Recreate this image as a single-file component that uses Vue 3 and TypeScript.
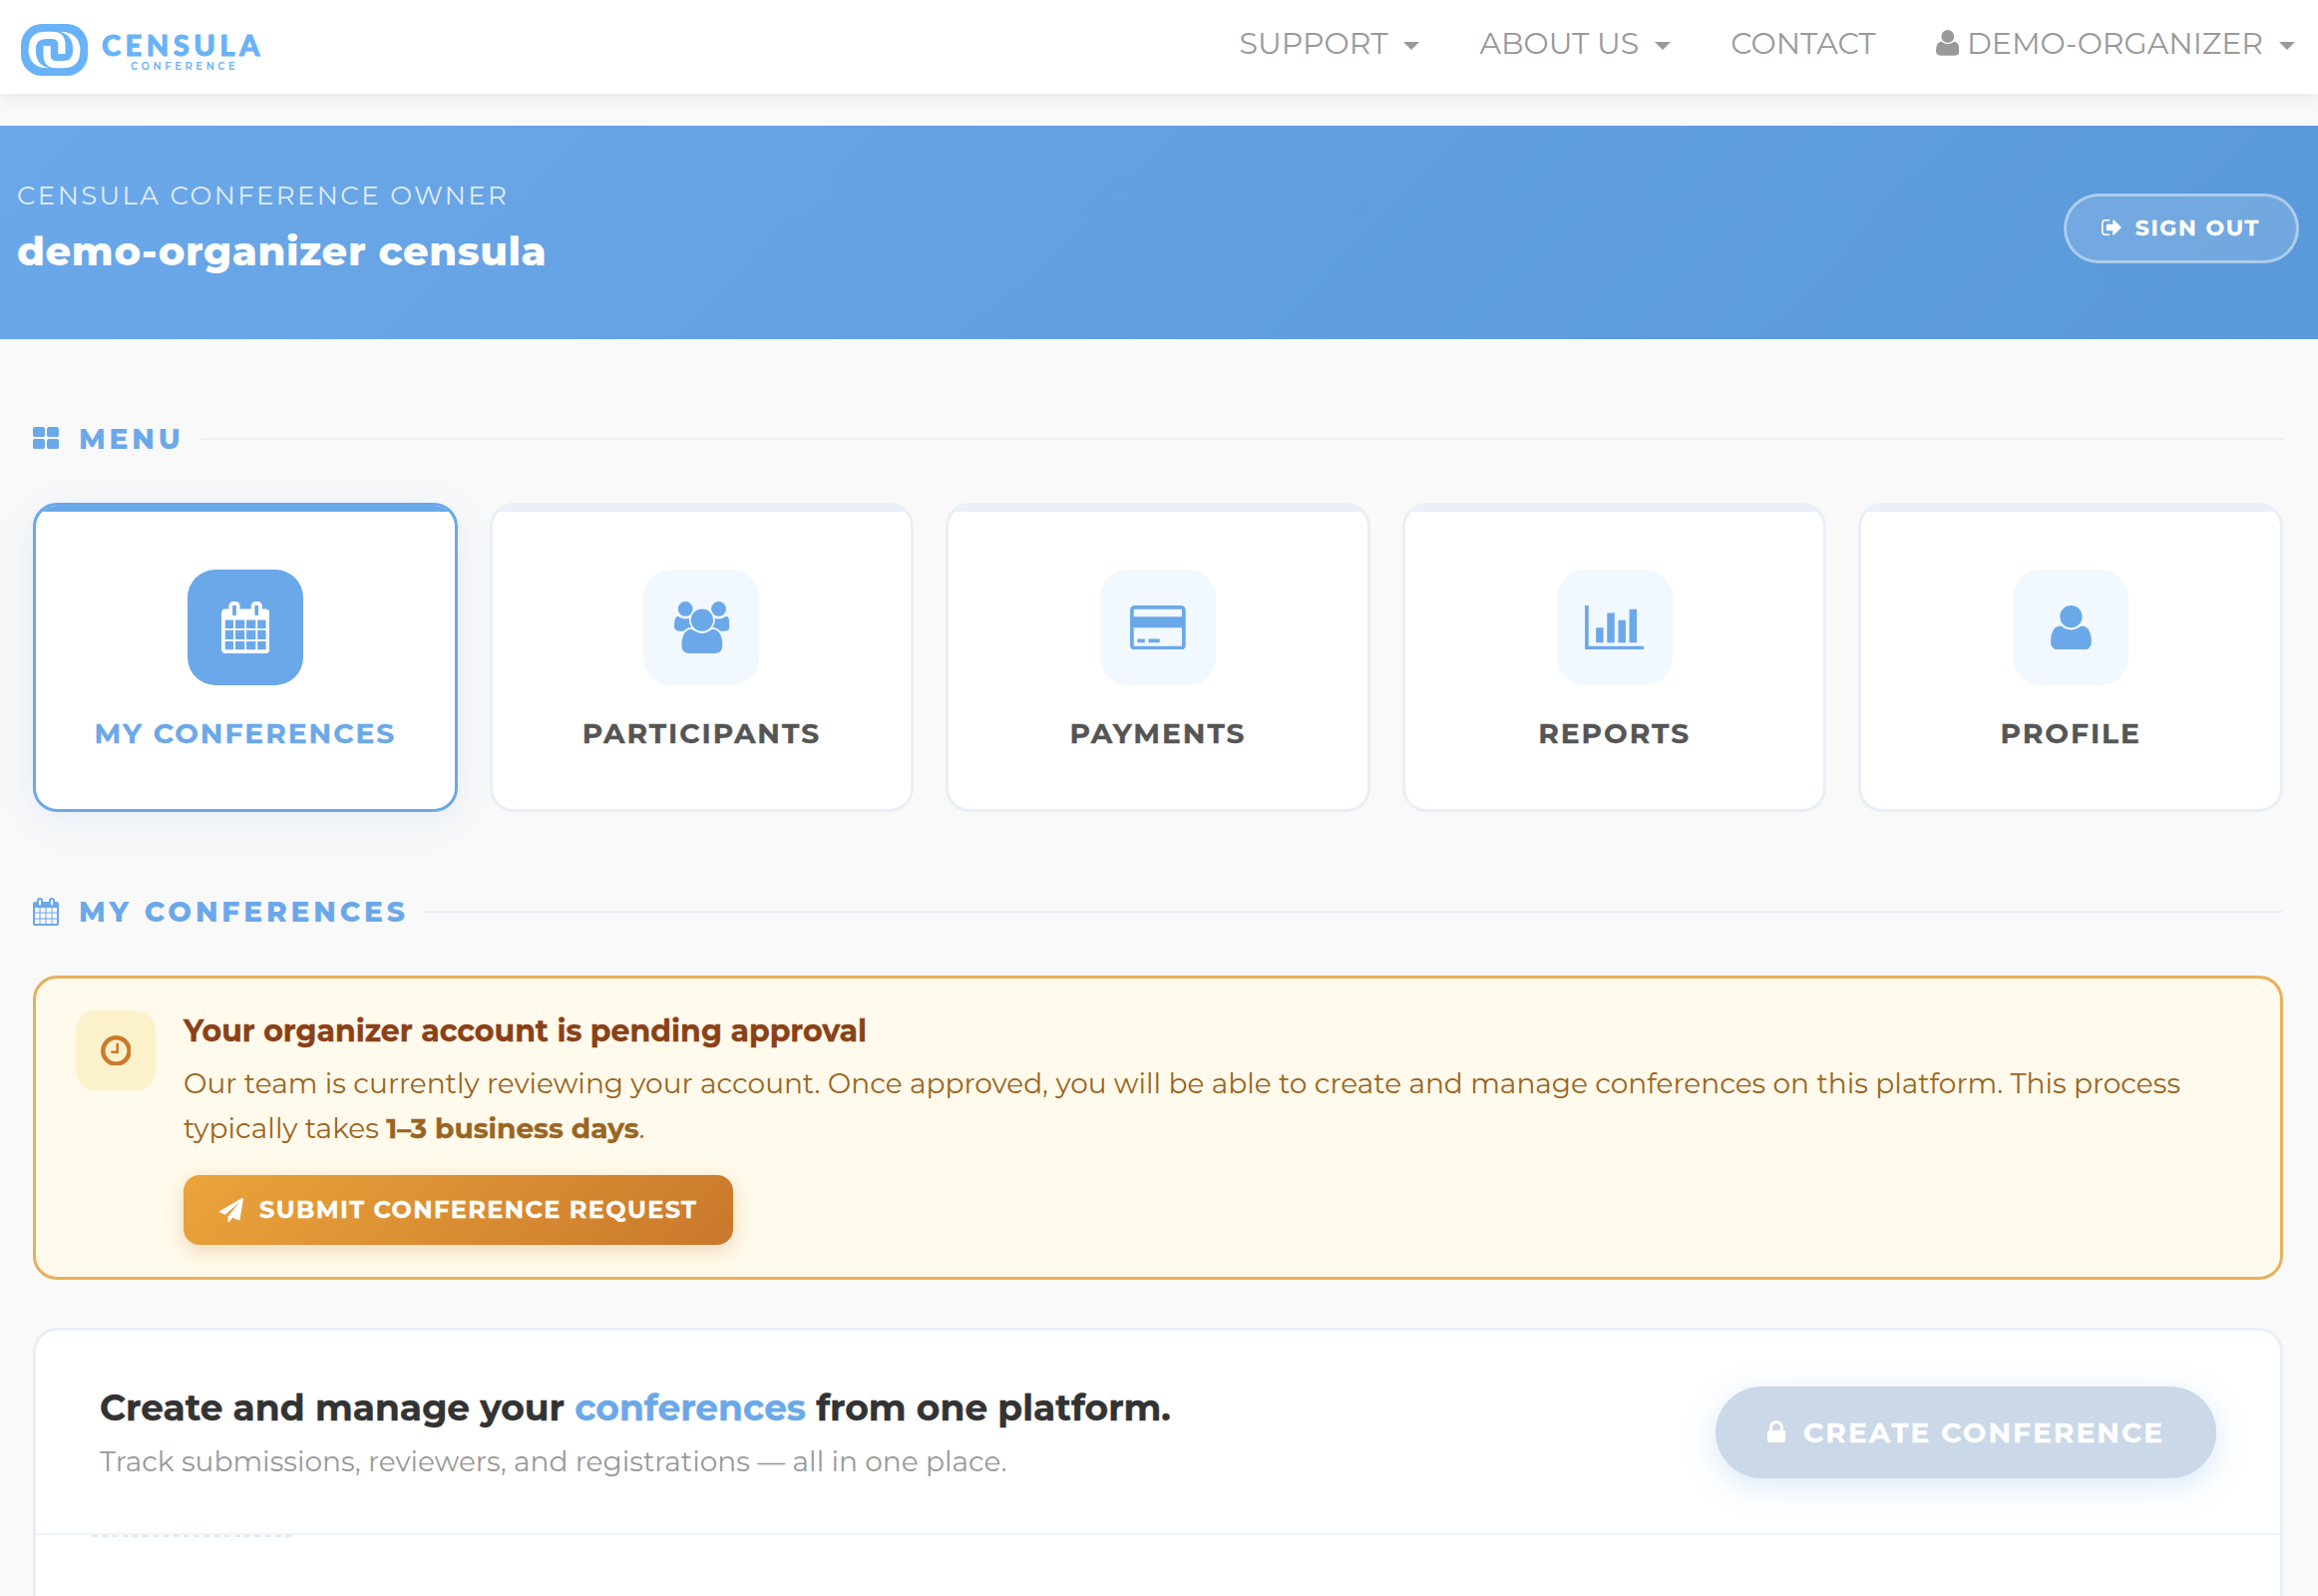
<script setup lang="ts">
interface Glyph {
  w: number
  top: number
  bottom: number
  d: string
}

// Font glyphs use a y-up grid of 1792 units per em.
const glyphs: Record<string, Glyph> = {
  calendar: {
    w: 1664, top: 1536, bottom: -256,
    d: 'M128 -128h288v288h-288v-288zM480 -128h320v288h-320v-288zM128 224h288v320h-288v-320zM480 224h320v320h-320v-320zM128 608h288v288h-288v-288zM864 -128h320v288h-320v-288zM480 608h320v288h-320v-288zM1248 -128h288v288h-288v-288zM864 224h320v320h-320v-320zM512 1088v288q0 13 -9.5 22.5t-22.5 9.5h-64q-13 0 -22.5 -9.5t-9.5 -22.5v-288q0 -13 9.5 -22.5t22.5 -9.5h64q13 0 22.5 9.5t9.5 22.5zM1248 224h288v320h-288v-320zM864 608h320v288h-320v-288zM1248 608h288v288h-288v-288zM1280 1088v288q0 13 -9.5 22.5t-22.5 9.5h-64q-13 0 -22.5 -9.5t-9.5 -22.5v-288q0 -13 9.5 -22.5t22.5 -9.5h64q13 0 22.5 9.5t9.5 22.5zM1664 1152v-1280q0 -52 -38 -90t-90 -38h-1408q-52 0 -90 38t-38 90v1280q0 52 38 90t90 38h128v96q0 66 47 113t113 47h64q66 0 113 -47t47 -113v-96h384v96q0 66 47 113t113 47h64q66 0 113 -47t47 -113v-96h128q52 0 90 -38t38 -90z',
  },
  users: {
    w: 1920, top: 1536, bottom: -256,
    d: 'M593 640q-162 -5 -265 -128h-134q-82 0 -138 40.5t-56 118.5q0 353 124 353q6 0 43.5 -21t97.5 -42.5t119 -21.5q67 0 133 23q-5 -37 -5 -66q0 -139 81 -256zM1664 3q0 -120 -73 -189.5t-194 -69.5h-874q-121 0 -194 69.5t-73 189.5q0 53 3.5 103.5t14 109t26.5 108.5t43 97.5t62 81t85.5 53.5t111.5 20q10 0 43 -21.5t73 -48t107 -48t135 -21.5t135 21.5t107 48t73 48t43 21.5q61 0 111.5 -20t85.5 -53.5t62 -81t43 -97.5t26.5 -108.5t14 -109t3.5 -103.5zM640 1280q0 -106 -75 -181t-181 -75t-181 75t-75 181t75 181t181 75t181 -75t75 -181zM1344 896q0 -159 -112.5 -271.5t-271.5 -112.5t-271.5 112.5t-112.5 271.5t112.5 271.5t271.5 112.5t271.5 -112.5t112.5 -271.5zM1920 671q0 -78 -56 -118.5t-138 -40.5h-134q-103 123 -265 128q81 117 81 256q0 29 -5 66q66 -23 133 -23q59 0 119 21.5t97.5 42.5t43.5 21q124 0 124 -353zM1792 1280q0 -106 -75 -181t-181 -75t-181 75t-75 181t75 181t181 75t181 -75t75 -181z',
  },
  card: {
    w: 1920, top: 1408, bottom: -128,
    d: 'M1760 1408q66 0 113 -47t47 -113v-1216q0 -66 -47 -113t-113 -47h-1600q-66 0 -113 47t-47 113v1216q0 66 47 113t113 47h1600zM160 1280q-13 0 -22.5 -9.5t-9.5 -22.5v-224h1664v224q0 13 -9.5 22.5t-22.5 9.5h-1600zM1760 0q13 0 22.5 9.5t9.5 22.5v608h-1664v-608q0 -13 9.5 -22.5t22.5 -9.5h1600zM256 128v128h256v-128h-256zM640 128v128h384v-128h-384z',
  },
  chart: {
    w: 2048, top: 1408, bottom: -128,
    d: 'M640 640v-512h-256v512h256zM1024 1152v-1024h-256v1024h256zM2048 0v-128h-2048v1536h128v-1408h1920zM1408 896v-768h-256v768h256zM1792 1280v-1152h-256v1152h256z',
  },
  user: {
    w: 1408, top: 1408, bottom: -128,
    d: 'M1408 131q0 -120 -73 -189.5t-194 -69.5h-874q-121 0 -194 69.5t-73 189.5q0 53 3.5 103.5t14 109t26.5 108.5t43 97.5t62 81t85.5 53.5t111.5 20q9 0 42 -21.5t74.5 -48t108 -48t133.5 -21.5t133.5 21.5t108 48t74.5 48t42 21.5q61 0 111.5 -20t85.5 -53.5t62 -81t43 -97.5t26.5 -108.5t14 -109t3.5 -103.5zM1088 1024q0 -159 -112.5 -271.5t-271.5 -112.5t-271.5 112.5t-112.5 271.5t112.5 271.5t271.5 112.5t271.5 -112.5t112.5 -271.5z',
  },
  grid: {
    w: 1664, top: 1408, bottom: 0,
    d: 'M768 512v-384q0 -52 -38 -90t-90 -38h-512q-52 0 -90 38t-38 90v384q0 52 38 90t90 38h512q52 0 90 -38t38 -90zM768 1280v-384q0 -52 -38 -90t-90 -38h-512q-52 0 -90 38t-38 90v384q0 52 38 90t90 38h512q52 0 90 -38t38 -90zM1664 512v-384q0 -52 -38 -90t-90 -38h-512q-52 0 -90 38t-38 90v384q0 52 38 90t90 38h512q52 0 90 -38t38 -90zM1664 1280v-384q0 -52 -38 -90t-90 -38h-512q-52 0 -90 38t-38 90v384q0 52 38 90t90 38h512q52 0 90 -38t38 -90z',
  },
  signout: {
    w: 1568, top: 1280, bottom: 0,
    d: 'M640 96q0 -4 1 -20t0.5 -26.5t-3 -23.5t-10 -19.5t-20.5 -6.5h-320q-119 0 -203.5 84.5t-84.5 203.5v704q0 119 84.5 203.5t203.5 84.5h320q13 0 22.5 -9.5t9.5 -22.5q0 -4 1 -20t0.5 -26.5t-3 -23.5t-10 -19.5t-20.5 -6.5h-320q-66 0 -113 -47t-47 -113v-704q0 -66 47 -113t113 -47h288h11h13t11.5 -1t11.5 -3t8 -5.5t7 -9t2 -13.5zM1568 640q0 -26 -19 -45l-544 -544q-19 -19 -45 -19t-45 19t-19 45v288h-448q-26 0 -45 19t-19 45v384q0 26 19 45t45 19h448v288q0 26 19 45t45 19t45 -19l544 -544q19 -19 19 -45z',
  },
  clock: {
    w: 1536, top: 1408, bottom: -128,
    d: 'M896 992v-448q0 -14 -9 -23t-23 -9h-320q-14 0 -23 9t-9 23v64q0 14 9 23t23 9h224v352q0 14 9 23t23 9h64q14 0 23 -9t9 -23zM1312 640q0 148 -73 273t-198 198t-273 73t-273 -73t-198 -198t-73 -273t73 -273t198 -198t273 -73t273 73t198 198t73 273zM1536 640q0 -209 -103 -385.5t-279.5 -279.5t-385.5 -103t-385.5 103t-279.5 279.5t-103 385.5t103 385.5t279.5 279.5t385.5 103t385.5 -103t279.5 -279.5t103 -385.5z',
  },
  plane: {
    w: 1792, top: 1536, bottom: -256,
    d: 'M1764 1525q33 -24 27 -64l-256 -1536q-5 -29 -32 -45q-14 -8 -31 -8q-11 0 -24 5l-453 185l-242 -295q-18 -23 -49 -23q-13 0 -22 4q-19 7 -30.5 23.5t-11.5 36.5v349l864 1059l-1069 -925l-395 162q-37 14 -40 55q-2 40 32 59l1664 960q15 9 32 9q20 0 36 -11z',
  },
  lock: {
    w: 1152, top: 1408, bottom: 0,
    d: 'M320 768h512v192q0 106 -75 181t-181 75t-181 -75t-75 -181v-192zM1152 672v-576q0 -40 -28 -68t-68 -28h-960q-40 0 -68 28t-28 68v576q0 40 28 68t68 28h32v192q0 184 132 316t316 132t316 -132t132 -316v-192h32q40 0 68 -28t28 -68z',
  },
}

const box = (name: string, size: number) => {
  const g = glyphs[name]
  const h = g.top - g.bottom
  return {
    width: (g.w / 1792) * size,
    height: (h / 1792) * size,
    viewBox: `0 ${-g.top} ${g.w} ${h}`,
  }
}

const nav = [
  { label: 'SUPPORT', caret: true },
  { label: 'ABOUT US', caret: true },
  { label: 'CONTACT', caret: false },
  { label: 'DEMO-ORGANIZER', caret: true, icon: 'user' },
]

const menu = [
  { label: 'MY CONFERENCES', icon: 'calendar', active: true },
  { label: 'PARTICIPANTS', icon: 'users', active: false },
  { label: 'PAYMENTS', icon: 'card', active: false },
  { label: 'REPORTS', icon: 'chart', active: false },
  { label: 'PROFILE', icon: 'user', active: false },
]
</script>

<template>
  <div class="page">
    <header class="topbar">
      <a class="brand">
        <svg class="brand-mark" width="67" height="52" viewBox="0 0 67 52">
          <rect width="67" height="52" rx="21" fill="#68b2f8" />
          <g v-for="r in [0, 180]" :key="r" :transform="`rotate(${r} 33.5 26)`">
            <path d="M40.9 30V21Q40.9 11.3 31.5 11.3H25Q11.3 11.3 11.3 25V29" fill="none" stroke="#fff" stroke-width="7.2" />
            <path d="M7.7 26C7.7 38 15 44.3 28 44.3C19.500 42 14.9 37 14.9 26Z" fill="#fff" />
          </g>
        </svg>
        <span class="brand-text">
          <span class="brand-name">CENSULA</span>
          <span class="brand-sub">CONFERENCE</span>
        </span>
      </a>
      <nav class="nav">
        <a v-for="n in nav" :key="n.label" class="nav-item">
          <svg v-if="n.icon" class="nav-icon" v-bind="box(n.icon, 30)"><path :d="glyphs[n.icon].d" transform="scale(1 -1)" /></svg>
          <span>{{ n.label }}</span>
          <i v-if="n.caret" class="caret"></i>
        </a>
      </nav>
    </header>

    <section class="banner">
      <div>
        <div class="role">CENSULA CONFERENCE OWNER</div>
        <h1 class="name">demo-organizer censula</h1>
      </div>
      <button class="signout">
        <svg v-bind="box('signout', 22.5)"><path :d="glyphs.signout.d" transform="scale(1 -1)" /></svg>
        <span>SIGN OUT</span>
      </button>
    </section>

    <main class="content">
      <h2 class="head">
        <svg class="head-grid" v-bind="box('grid', 28)"><path :d="glyphs.grid.d" transform="scale(1 -1)" /></svg>
        <span>MENU</span>
      </h2>

      <div class="cards">
        <a v-for="m in menu" :key="m.label" class="card" :class="{ active: m.active }">
          <span class="tile">
            <svg v-bind="box(m.icon, 52)"><path fill-rule="evenodd" :d="glyphs[m.icon].d" transform="scale(1 -1)" /></svg>
          </span>
          <span class="card-label">{{ m.label }}</span>
        </a>
      </div>

      <h2 class="head">
        <svg v-bind="box('calendar', 28)"><path fill-rule="evenodd" :d="glyphs.calendar.d" transform="scale(1 -1)" /></svg>
        <span>MY CONFERENCES</span>
      </h2>

      <div class="alert">
        <div class="alert-icon">
          <svg v-bind="box('clock', 36)"><path fill-rule="evenodd" :d="glyphs.clock.d" transform="scale(1 -1)" /></svg>
        </div>
        <div class="alert-body">
          <h3>Your organizer account is pending approval</h3>
          <p>
            Our team is currently reviewing your account. Once approved, you will be able to create and manage conferences on this platform. This process typically takes <strong>1–3 business days</strong>.
          </p>
          <button class="submit">
            <svg v-bind="box('plane', 24)"><path :d="glyphs.plane.d" transform="scale(1 -1)" /></svg>
            <span>SUBMIT CONFERENCE REQUEST</span>
          </button>
        </div>
      </div>

      <div class="panel">
        <div class="panel-head">
          <div>
            <h3>Create and manage your <em>conferences</em> from one platform.</h3>
            <p>Track submissions, reviewers, and registrations — all in one place.</p>
          </div>
          <button class="create">
            <svg v-bind="box('lock', 28)"><path fill-rule="evenodd" :d="glyphs.lock.d" transform="scale(1 -1)" /></svg>
            <span>CREATE CONFERENCE</span>
          </button>
        </div>
        <div class="dashes"></div>
      </div>
    </main>
  </div>
</template>

<style>
body {
  background: #f9f9f9;
}
</style>

<style scoped>
.page {
  height: 1600px;
  overflow: hidden;
  display: flex;
  flex-direction: column;
  background: #f9f9f9;
  font-family: Montserrat, Inter, sans-serif;
}
.page * {
  box-sizing: border-box;
}
svg {
  display: block;
  flex: none;
  fill: currentColor;
}
h1, h2, h3, p {
  margin: 0;
}
button {
  font-family: inherit;
  white-space: nowrap;
}
h3, strong, .card-label, .signout span, .submit span, .create span {
  -webkit-text-stroke: 0.35px currentColor;
}
.topbar {
  flex: none;
  height: 94px;
  padding: 0 23px 0 21px;
  display: flex;
  justify-content: space-between;
  background: #fff;
  box-shadow: 0 3px 16px rgba(0, 0, 0, 0.08);
}
.brand {
  display: flex;
  padding-top: 24px;
  color: #68b2f8;
}
.brand-text {
  display: flex;
  flex-direction: column;
  padding-left: 14px;
}
.brand-name {
  margin-top: 5px;
  font: 900 29px/32px Lato, sans-serif;
  letter-spacing: 4.5px;
  -webkit-text-stroke: 0.9px currentColor;
}
.brand-sub {
  margin-top: 1px;
  padding-left: 29px;
  font-size: 10px;
  line-height: 10px;
  font-weight: 600;
  letter-spacing: 3.6px;
}
.nav {
  display: flex;
  gap: 60px;
  height: 86px;
  align-items: center;
  color: #999;
  font-size: 30px;
}
.nav-item {
  display: flex;
  align-items: center;
}
.nav-icon {
  margin-right: 8px;
}
.caret {
  margin: 6px 0 0 16px;
  border: 8px solid transparent;
  border-top-color: currentColor;
  border-bottom: 0;
}
.banner {
  flex: none;
  height: 214px;
  margin-top: 32px;
  padding: 50px 19px 0 17px;
  display: flex;
  justify-content: space-between;
  align-items: flex-start;
  color: #fff;
  background: linear-gradient(135deg, #6ba8e9 0%, #5998d9 100%);
}
.role {
  font-size: 26px;
  line-height: 40px;
  letter-spacing: 2.4px;
  opacity: 0.8;
}
.name {
  margin-top: 11px;
  font-size: 40px;
  line-height: 50px;
  font-weight: 800;
  letter-spacing: 0.6px;
}
.signout {
  width: 236px;
  height: 70px;
  margin-top: 18px;
  padding: 0 0 2px 35px;
  display: flex;
  align-items: center;
  gap: 14px;
  border: 3px solid rgba(255, 255, 255, 0.5);
  border-radius: 35px;
  background: rgba(255, 255, 255, 0.15);
  background-clip: padding-box;
  color: #fff;
  font-size: 22px;
  font-weight: 700;
  letter-spacing: 1.7px;
}
.content {
  flex: 1;
  min-height: 0;
  padding: 0 35px 0 33px;
  display: flex;
  flex-direction: column;
}
.head {
  flex: none;
  margin: 80px 0 44px;
  height: 40px;
  display: flex;
  align-items: center;
  gap: 20px;
  color: #6ba8e9;
  font-size: 28px;
  font-weight: 800;
  letter-spacing: 3.9px;
}
.head-grid {
  margin-top: -2px;
}
.head::after {
  content: '';
  flex: 1;
  height: 2px;
  margin-left: -4px;
  background: #e9eff6;
}
.cards {
  flex: none;
  display: grid;
  grid-template-columns: repeat(5, 1fr);
  gap: 32px;
  height: 310px;
}
.card {
  position: relative;
  overflow: hidden;
  padding-top: 64px;
  display: flex;
  flex-direction: column;
  align-items: center;
  border: 3px solid #e9eff6;
  border-radius: 24px;
  background: #fff;
  color: #555;
}
.card::before {
  content: '';
  position: absolute;
  inset: 0 0 auto;
  height: 6px;
  background: #e9eff6;
}
.card.active {
  border-color: #6ba8e9;
  color: #6ba8e9;
  box-shadow: 0 8px 40px rgba(107, 168, 233, 0.15);
}
.card.active::before {
  background: #6ba8e9;
}
.tile {
  width: 116px;
  height: 116px;
  display: flex;
  align-items: center;
  justify-content: center;
  border-radius: 28px;
  background: #f2f8ff;
  color: #6ba8e9;
}
.active .tile {
  background: #6ba8e9;
  color: #fff;
}
.card-label {
  margin-top: 28px;
  font-size: 28px;
  line-height: 40px;
  font-weight: 700;
  letter-spacing: 2px;
}
.alert {
  flex: none;
  height: 305px;
  padding: 32px 40px;
  display: flex;
  gap: 28px;
  border: 3px solid #e8b05c;
  border-radius: 24px;
  background: #fffaeb;
}
.alert-icon {
  flex: none;
  width: 80px;
  height: 80px;
  display: flex;
  align-items: center;
  justify-content: center;
  border-radius: 20px;
  background: #fbf2cc;
  color: #cb7a2b;
}
.alert-body h3 {
  margin-top: 1px;
  font-size: 30px;
  line-height: 40px;
  font-weight: 700;
  color: #8a4117;
}
.alert-body p {
  margin-top: 10px;
  font-size: 28px;
  line-height: 45px;
  color: #9a6522;
}
.submit {
  width: 551px;
  height: 70px;
  margin-top: 24px;
  padding: 0 0 2px 36px;
  display: flex;
  align-items: center;
  gap: 16px;
  border: 0;
  border-radius: 16px;
  background: linear-gradient(135deg, #eba43b, #c9782b);
  box-shadow: 0 6px 20px rgba(201, 120, 43, 0.25);
  color: #fff;
  font-size: 24px;
  font-weight: 700;
  letter-spacing: 1.37px;
}
.submit svg {
  margin-top: 2px;
}
.panel {
  flex: none;
  height: 320px;
  margin-top: 48px;
  border: 3px solid #e9eff6;
  border-radius: 24px;
  background: #fff;
}
.panel-head {
  height: 205px;
  padding: 56px 64px 0;
  display: flex;
  justify-content: space-between;
  align-items: flex-start;
  border-bottom: 2px solid #eff4f9;
}
.panel-head h3 {
  margin-top: -1px;
  font-size: 36px;
  line-height: 44px;
  font-weight: 700;
  color: #333;
}
.panel-head em {
  font-style: normal;
  color: #6ba8e9;
}
.panel-head p {
  margin-top: 12px;
  font-size: 28px;
  line-height: 40px;
  color: #999;
}
.create {
  width: 502px;
  height: 92px;
  padding: 0 0 1px 52px;
  display: flex;
  align-items: center;
  gap: 18px;
  border: 0;
  border-radius: 46px;
  background: #cad8e8;
  box-shadow: 0 8px 32px rgba(107, 168, 233, 0.25);
  color: #fff;
  font-size: 28px;
  font-weight: 700;
  letter-spacing: 2.03px;
}
.create svg {
  margin-top: -1px;
}
.dashes {
  width: 200px;
  margin-left: 56px;
  border-top: 2px dashed #dfe9f3;
}
</style>
